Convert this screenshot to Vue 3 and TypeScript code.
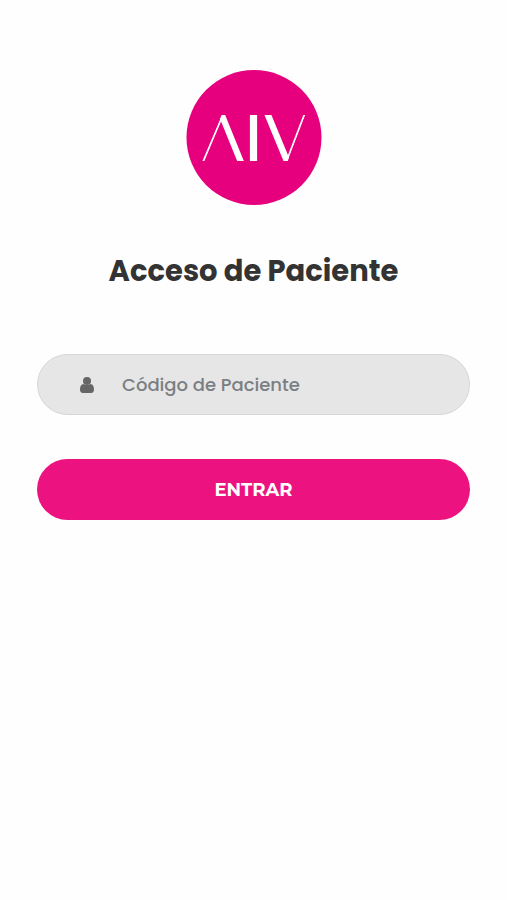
<script setup lang="ts">
import { ref } from 'vue'

const code = ref<string>('')
</script>

<template>
  <main class="page">
    <svg class="logo" viewBox="0 0 136 136" role="img" aria-label="AIV">
      <defs>
        <clipPath id="mark-band">
          <polygon points="35.7,45 119.5,45 101.7,91 16,91" />
        </clipPath>
      </defs>
      <circle cx="68" cy="67.5" r="67.5" fill="#e6007e" />
      <g clip-path="url(#mark-band)" stroke="#fff" fill="none">
        <line x1="38.1" y1="42" x2="16.1" y2="94" stroke-width="1.8" />
        <line x1="34.6" y1="42" x2="55.7" y2="94" stroke-width="6.2" />
        <line x1="67.5" y1="42" x2="67.5" y2="94" stroke-width="7.2" />
        <line x1="80.7" y1="42" x2="102.2" y2="94" stroke-width="6.4" />
        <line x1="119.4" y1="42" x2="99.5" y2="94" stroke-width="1.8" />
      </g>
    </svg>
    <h1 class="title">Acceso de Paciente</h1>
    <form class="form" @submit.prevent>
      <label class="field">
        <svg class="user" viewBox="0 0 14 16" aria-hidden="true">
          <circle cx="7" cy="4" r="4" />
          <path d="M3.6 7C1 7.2 0 9.4 0 12.8C0 14.8 1 16 2.8 16H11.2C13 16 14 14.8 14 12.8C14 9.4 13 7.2 10.4 7C9.4 7.8 8.2 8 7 8C5.8 8 4.6 7.8 3.6 7Z" />
        </svg>
        <input v-model="code" class="input" type="text" placeholder="Código de Paciente" aria-label="Código de Paciente" />
      </label>
      <button class="submit" type="submit">ENTRAR</button>
    </form>
  </main>
</template>

<style>
body {
  margin: 0;
  background: #fefefe;
}
</style>

<style scoped>
.page {
  display: flex;
  flex-direction: column;
  align-items: center;
  padding: 70px 37px 40px;
  font-family: Poppins, Inter, "Open Sans", sans-serif;
}

.logo {
  width: 136px;
  height: 136px;
}

.title {
  margin: 45px 0 63px;
  color: #333;
  font-size: 29px;
  font-weight: 700;
  line-height: 40px;
  text-align: center;
}

.form {
  display: flex;
  flex-direction: column;
  gap: 44px;
  width: 100%;
}

.field {
  display: flex;
  align-items: center;
  gap: 28px;
  box-sizing: border-box;
  height: 61px;
  padding: 0 42px;
  border: 1px solid #d5d7d7;
  border-radius: 31px;
  background: #e6e6e6;
}

.user {
  flex: none;
  width: 14px;
  height: 16px;
  fill: #666;
}

.input {
  flex: 1;
  min-width: 0;
  padding: 0;
  border: 0;
  outline: 0;
  background: transparent;
  color: #666;
  font-family: inherit;
  font-size: 18px;
  font-weight: 500;
  line-height: 28px;
}

.input::placeholder {
  color: #7b7f83;
  opacity: 1;
}

.submit {
  height: 61px;
  padding: 0 28px;
  border: 0;
  border-radius: 31px;
  background: #ec1380;
  color: #fff;
  font-family: Montserrat, Inter, "Open Sans", sans-serif;
  font-size: 18px;
  font-weight: 700;
  line-height: 28px;
  cursor: pointer;
}
</style>
